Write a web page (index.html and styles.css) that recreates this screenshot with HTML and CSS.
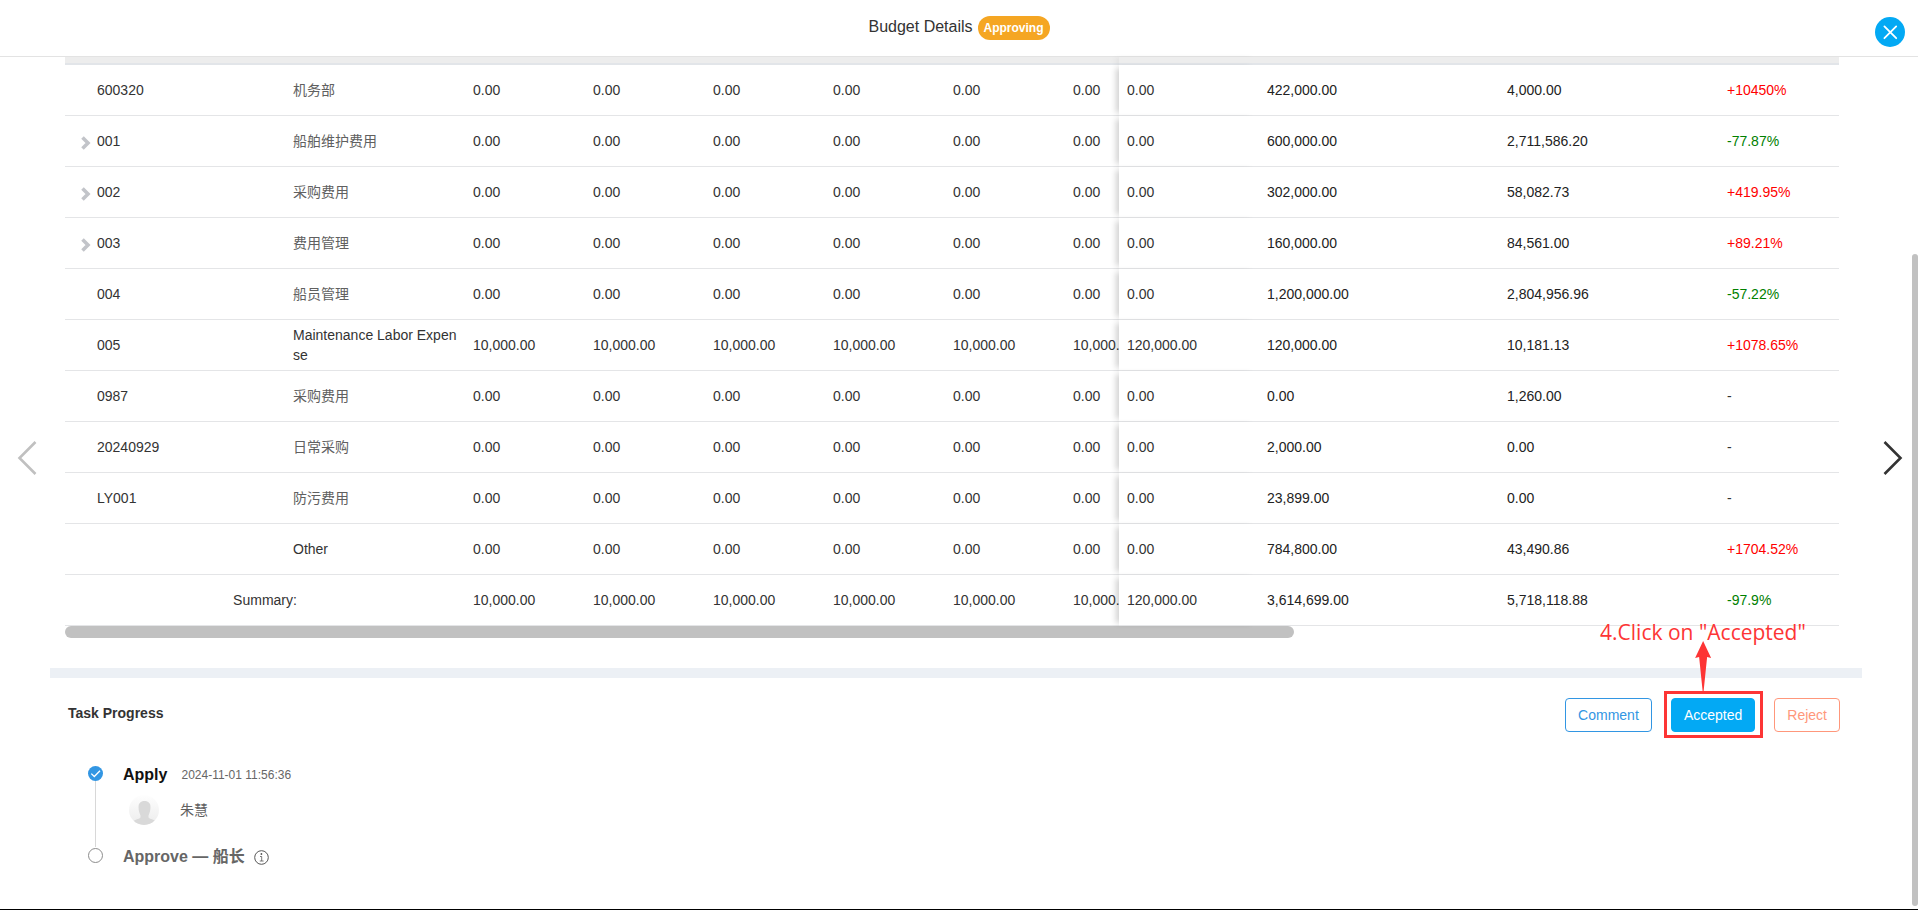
FILE: index.html
```html
<!DOCTYPE html>
<html lang="en">
<head>
<meta charset="utf-8">
<title>Budget Details</title>
<link rel="stylesheet" href="styles.css">
</head>
<body>
<div class="dialog">
  <header class="dialog-header">
    <h1 class="title">Budget Details</h1>
    <span class="badge">Approving</span>
    <button class="close" type="button" aria-label="Close">
      <svg width="30" height="30" viewBox="0 0 30 30"><path d="M9.4 9.4 21.2 21.2M21.2 9.4 9.4 21.2" fill="none" stroke="#fff" stroke-width="1.8" stroke-linecap="round"/></svg>
    </button>
  </header>

  <main class="body">
    <button class="nav nav-prev" type="button" aria-label="Previous">
      <svg width="20" height="34" viewBox="0 0 20 34"><path d="M18.500 1 2.500 17 18.500 33" fill="none" stroke="currentColor" stroke-width="2.600"/></svg>
    </button>

    <div class="content">
      <section class="budget">
        <table class="table">
          <colgroup>
            <col class="w-code"><col class="w-name">
            <col class="w-month"><col class="w-month"><col class="w-month"><col class="w-month"><col class="w-month"><col class="w-rest">
            <col class="w-total"><col class="w-plan"><col class="w-actual"><col class="w-rate">
          </colgroup>
          <thead>
            <tr><td></td><td></td><td></td><td></td><td></td><td></td><td></td><td></td><td class="fixed"></td><td></td><td></td><td></td></tr>
          </thead>
          <tbody>
            <tr><td class="code">600320</td><td class="cn">机务部</td><td>0.00</td><td>0.00</td><td>0.00</td><td>0.00</td><td>0.00</td><td class="cut">0.00</td><td class="fixed">0.00</td><td class="dark">422,000.00</td><td class="dark">4,000.00</td><td class="up">+10450%</td></tr>
            <tr><td class="code"><button class="expand" type="button" aria-label="Expand 001"><svg width="10" height="14" viewBox="0 0 10 14"><path d="M1.500 1.500 7 7 1.500 12.500" fill="none" stroke="currentColor" stroke-width="3.600"/></svg></button>001</td><td class="cn">船舶维护费用</td><td>0.00</td><td>0.00</td><td>0.00</td><td>0.00</td><td>0.00</td><td class="cut">0.00</td><td class="fixed">0.00</td><td class="dark">600,000.00</td><td class="dark">2,711,586.20</td><td class="down">-77.87%</td></tr>
            <tr><td class="code"><button class="expand" type="button" aria-label="Expand 002"><svg width="10" height="14" viewBox="0 0 10 14"><path d="M1.500 1.500 7 7 1.500 12.500" fill="none" stroke="currentColor" stroke-width="3.600"/></svg></button>002</td><td class="cn">采购费用</td><td>0.00</td><td>0.00</td><td>0.00</td><td>0.00</td><td>0.00</td><td class="cut">0.00</td><td class="fixed">0.00</td><td class="dark">302,000.00</td><td class="dark">58,082.73</td><td class="up">+419.95%</td></tr>
            <tr><td class="code"><button class="expand" type="button" aria-label="Expand 003"><svg width="10" height="14" viewBox="0 0 10 14"><path d="M1.500 1.500 7 7 1.500 12.500" fill="none" stroke="currentColor" stroke-width="3.600"/></svg></button>003</td><td class="cn">费用管理</td><td>0.00</td><td>0.00</td><td>0.00</td><td>0.00</td><td>0.00</td><td class="cut">0.00</td><td class="fixed">0.00</td><td class="dark">160,000.00</td><td class="dark">84,561.00</td><td class="up">+89.21%</td></tr>
            <tr><td class="code">004</td><td class="cn">船员管理</td><td>0.00</td><td>0.00</td><td>0.00</td><td>0.00</td><td>0.00</td><td class="cut">0.00</td><td class="fixed">0.00</td><td class="dark">1,200,000.00</td><td class="dark">2,804,956.96</td><td class="down">-57.22%</td></tr>
            <tr><td class="code">005</td><td class="name">Maintenance Labor Expense</td><td>10,000.00</td><td>10,000.00</td><td>10,000.00</td><td>10,000.00</td><td>10,000.00</td><td class="cut">10,000.00</td><td class="fixed">120,000.00</td><td class="dark">120,000.00</td><td class="dark">10,181.13</td><td class="up">+1078.65%</td></tr>
            <tr><td class="code">0987</td><td class="cn">采购费用</td><td>0.00</td><td>0.00</td><td>0.00</td><td>0.00</td><td>0.00</td><td class="cut">0.00</td><td class="fixed">0.00</td><td class="dark">0.00</td><td class="dark">1,260.00</td><td>-</td></tr>
            <tr><td class="code">20240929</td><td class="cn">日常采购</td><td>0.00</td><td>0.00</td><td>0.00</td><td>0.00</td><td>0.00</td><td class="cut">0.00</td><td class="fixed">0.00</td><td class="dark">2,000.00</td><td class="dark">0.00</td><td>-</td></tr>
            <tr><td class="code">LY001</td><td class="cn">防污费用</td><td>0.00</td><td>0.00</td><td>0.00</td><td>0.00</td><td>0.00</td><td class="cut">0.00</td><td class="fixed">0.00</td><td class="dark">23,899.00</td><td class="dark">0.00</td><td>-</td></tr>
            <tr><td class="code"></td><td class="name">Other</td><td>0.00</td><td>0.00</td><td>0.00</td><td>0.00</td><td>0.00</td><td class="cut">0.00</td><td class="fixed">0.00</td><td class="dark">784,800.00</td><td class="dark">43,490.86</td><td class="up">+1704.52%</td></tr>
            <tr><td class="summary" colspan="2">Summary:</td><td>10,000.00</td><td>10,000.00</td><td>10,000.00</td><td>10,000.00</td><td>10,000.00</td><td class="cut">10,000.00</td><td class="fixed">120,000.00</td><td class="dark">3,614,699.00</td><td class="dark">5,718,118.88</td><td class="down">-97.9%</td></tr>
          </tbody>
        </table>
        <div class="hscroll"><div class="hscroll-thumb"></div></div>
      </section>

      <section class="progress">
        <div class="progress-head">
          <h2 class="progress-title">Task Progress</h2>
          <div class="actions">
            <button class="btn btn-comment" type="button">Comment</button>
            <div class="marked">
              <button class="btn btn-accept" type="button">Accepted</button>
              <div class="callout">
                <span class="callout-text">4.Click on "Accepted"</span>
                <svg class="callout-arrow" width="16" height="50" viewBox="0 0 16 50"><path d="M8 0 16 17 12 16 8.500 50H7.500L4 16 0 17Z" fill="#fd3535"/></svg>
              </div>
            </div>
            <button class="btn btn-reject" type="button">Reject</button>
          </div>
        </div>

        <ol class="timeline">
          <li class="step step-done">
            <svg class="dot" width="15" height="15" viewBox="0 0 15 15"><circle cx="7.500" cy="7.500" r="7.500" fill="#3296e3"/><path d="M3.300 7.600 6.300 10.500 12 4.700" fill="none" stroke="#fff" stroke-width="1.300"/></svg>
            <div class="step-main">
              <div class="step-line"><strong class="step-name">Apply</strong><time class="step-time">2024-11-01 11:56:36</time></div>
              <div class="person">
                <svg width="30" height="30" viewBox="0 0 30 30"><defs><clipPath id="face"><circle cx="15" cy="15" r="15"/></clipPath><linearGradient id="shade" x1="0" y1="0" x2="0" y2="1"><stop offset="0" stop-color="#fefefe"/><stop offset="1" stop-color="#ececec"/></linearGradient></defs><g clip-path="url(#face)"><rect width="30" height="30" fill="url(#shade)"/><path d="M15.500 6C11.500 6 9.500 8.500 9.500 12c0 3 .8 6 2 8.500v1.500c0 2-5 2-7.500 4.500V30h23v-3.500C24.500 24 19.500 24 19.500 22v-1.500c1.200-2.500 2-5.500 2-8.500 0-3.500-2-6-6-6Z" fill="#d9d9d9"/></g></svg>
                <span class="person-name">朱慧</span>
              </div>
            </div>
          </li>
          <li class="step">
            <svg class="dot" width="15" height="15" viewBox="0 0 15 15"><circle cx="7.500" cy="7.500" r="7" fill="#fff" stroke="#8c8c8c"/></svg>
            <div class="step-main">
              <div class="step-line"><strong class="step-name pending">Approve — 船长</strong>
                <svg class="info" width="15" height="15" viewBox="0 0 15 15"><circle cx="7.500" cy="7.500" r="6.800" fill="none" stroke="#555"/><path d="M6 6.500h1.700v4.500M5.800 11h3.800" fill="none" stroke="#555" stroke-width=".8"/><circle cx="7.400" cy="4" r=".9" fill="#555"/></svg>
              </div>
            </div>
          </li>
        </ol>
      </section>
    </div>

    <button class="nav nav-next" type="button" aria-label="Next">
      <svg width="20" height="34" viewBox="0 0 20 34"><path d="M1.500 1 17.500 17 1.500 33" fill="none" stroke="currentColor" stroke-width="2.600"/></svg>
    </button>
    <div class="vscroll-thumb"></div>
  </main>
</div>
</body>
</html>
```

FILE: styles.css
```css
* { box-sizing: border-box; }

body {
  margin: 0;
  background: #fff;
  color: #333;
  font: 14px/20px "Liberation Sans", "Noto Sans CJK SC", sans-serif;
}

button {
  font: inherit;
  padding: 0;
  border: 0;
  background: none;
  cursor: pointer;
}

svg { display: block; }

.dialog {
  display: flex;
  flex-direction: column;
  height: 100vh;
  border-bottom: 1px solid #000;
  overflow: hidden;
}

/* Header */
.dialog-header {
  position: relative;
  display: flex;
  flex: none;
  justify-content: center;
  align-items: flex-start;
  gap: 5px;
  padding: 16px 0;
  border-bottom: 1px solid #e3e3e3;
}

.title {
  margin: 0;
  font-size: 16px;
  font-weight: 400;
  line-height: 22px;
}

.badge {
  padding: 0 6px;
  border-radius: 12px;
  background: #f5a623;
  color: #fff;
  font-size: 12px;
  font-weight: 700;
  line-height: 24px;
}

.close {
  position: absolute;
  top: 17px;
  right: 13px;
  border-radius: 50%;
  background: #03a9f4;
}

/* Body with side navigation */
.body {
  position: relative;
  display: grid;
  grid-template-columns: 50px 1fr 56px;
  flex: 1;
  min-height: 0;
}

.nav {
  align-self: center;
  margin-bottom: 70px;
}

.nav-prev { padding-left: 17px; color: #c0c0c0; }
.nav-next { padding-left: 21px; color: #333; }

.vscroll-thumb {
  position: absolute;
  right: 0;
  top: 197px;
  bottom: 3px;
  width: 6px;
  border-radius: 3px;
  background: #c1c1c1;
}

/* Budget table */
.budget {
  padding: 0 23px 30px 15px;
  border-bottom: 10px solid #ecf0f5;
}

.table {
  width: 100%;
  table-layout: fixed;
  border-collapse: separate;
  border-spacing: 0;
}

.w-code { width: 220px; }
.w-name { width: 180px; }
.w-month { width: 120px; }
.w-total { width: 140px; }
.w-plan { width: 240px; }
.w-actual { width: 220px; }
.w-rate { width: 120px; }

.table td {
  height: 51px;
  padding: 0 8px;
  border-bottom: 1px solid #e4e5e7;
  background: #fff;
  white-space: nowrap;
}

.table thead td {
  height: 8px;
  border-bottom: 2px solid #e2e5e9;
  background: #ededed;
}

.table .code { position: relative; padding-left: 32px; }
.table .name,
.table .cn { white-space: normal; word-break: break-all; }
.table .cn { color: #606060; }
.table .summary { text-align: center; }
.table .cut { padding-right: 0; overflow: hidden; }
.table .dark { color: #222; }
.table .up { color: #f00; }
.table .down { color: #008000; }

.table .fixed {
  position: relative;
  box-shadow: -6px 0 6px -3px rgba(0, 0, 0, .18);
}

.expand {
  position: absolute;
  left: 16px;
  top: 20px;
  color: #c2c4c9;
}

.hscroll-thumb {
  width: 1229px;
  max-width: 100%;
  height: 12px;
  border-radius: 6px;
  background: #c1c1c1;
}

/* Task progress */
.progress { padding: 20px 22px 0 18px; }

.progress-head {
  display: flex;
  justify-content: space-between;
}

.progress-title {
  margin: 0;
  font-size: 14px;
  line-height: 30px;
}

.actions { display: flex; }

.btn {
  height: 34px;
  padding: 0 12px;
  border: 1px solid;
  border-radius: 4px;
}

.btn-comment { min-width: 87px; color: #3296e3; }
.btn-accept { min-width: 84px; border-color: #03a9f4; background: #03a9f4; color: #fff; }
.btn-reject { color: #ff977b; }

.marked {
  position: relative;
  margin: -7px 11px -6px 12px;
  padding: 4px 5px 3px 4px;
  border: 3px solid #fd3535;
}

.callout {
  position: absolute;
  left: 36px;
  bottom: 100%;
  display: flex;
  flex-direction: column;
  align-items: center;
  margin-bottom: 3px;
  transform: translateX(-50%);
}

.callout-text {
  color: #fd3535;
  font-family: "Open Sans", sans-serif;
  font-size: 21px;
  line-height: 18px;
  white-space: nowrap;
}

/* Timeline */
.timeline {
  margin: 33px 0 0;
  padding: 0 0 0 20px;
  list-style: none;
}

.step {
  position: relative;
  display: flex;
  gap: 20px;
  min-height: 82px;
}

.step-done::before {
  content: "";
  position: absolute;
  left: 7px;
  top: 15px;
  bottom: 0;
  width: 1px;
  background: #d8d8d8;
}

.dot {
  position: relative;
  flex: none;
  margin-top: 1px;
}

.step-line {
  display: flex;
  align-items: center;
  line-height: 20px;
}

.step-name { color: #111; font-size: 16px; }
.pending { color: #666; }
.step-time { margin-left: 14px; color: #666; font-size: 12px; }
.info { margin-left: 9px; }

.person {
  display: flex;
  align-items: center;
  gap: 21px;
  padding: 10px 0 0 6px;
}

.person-name { color: #606060; }
```
